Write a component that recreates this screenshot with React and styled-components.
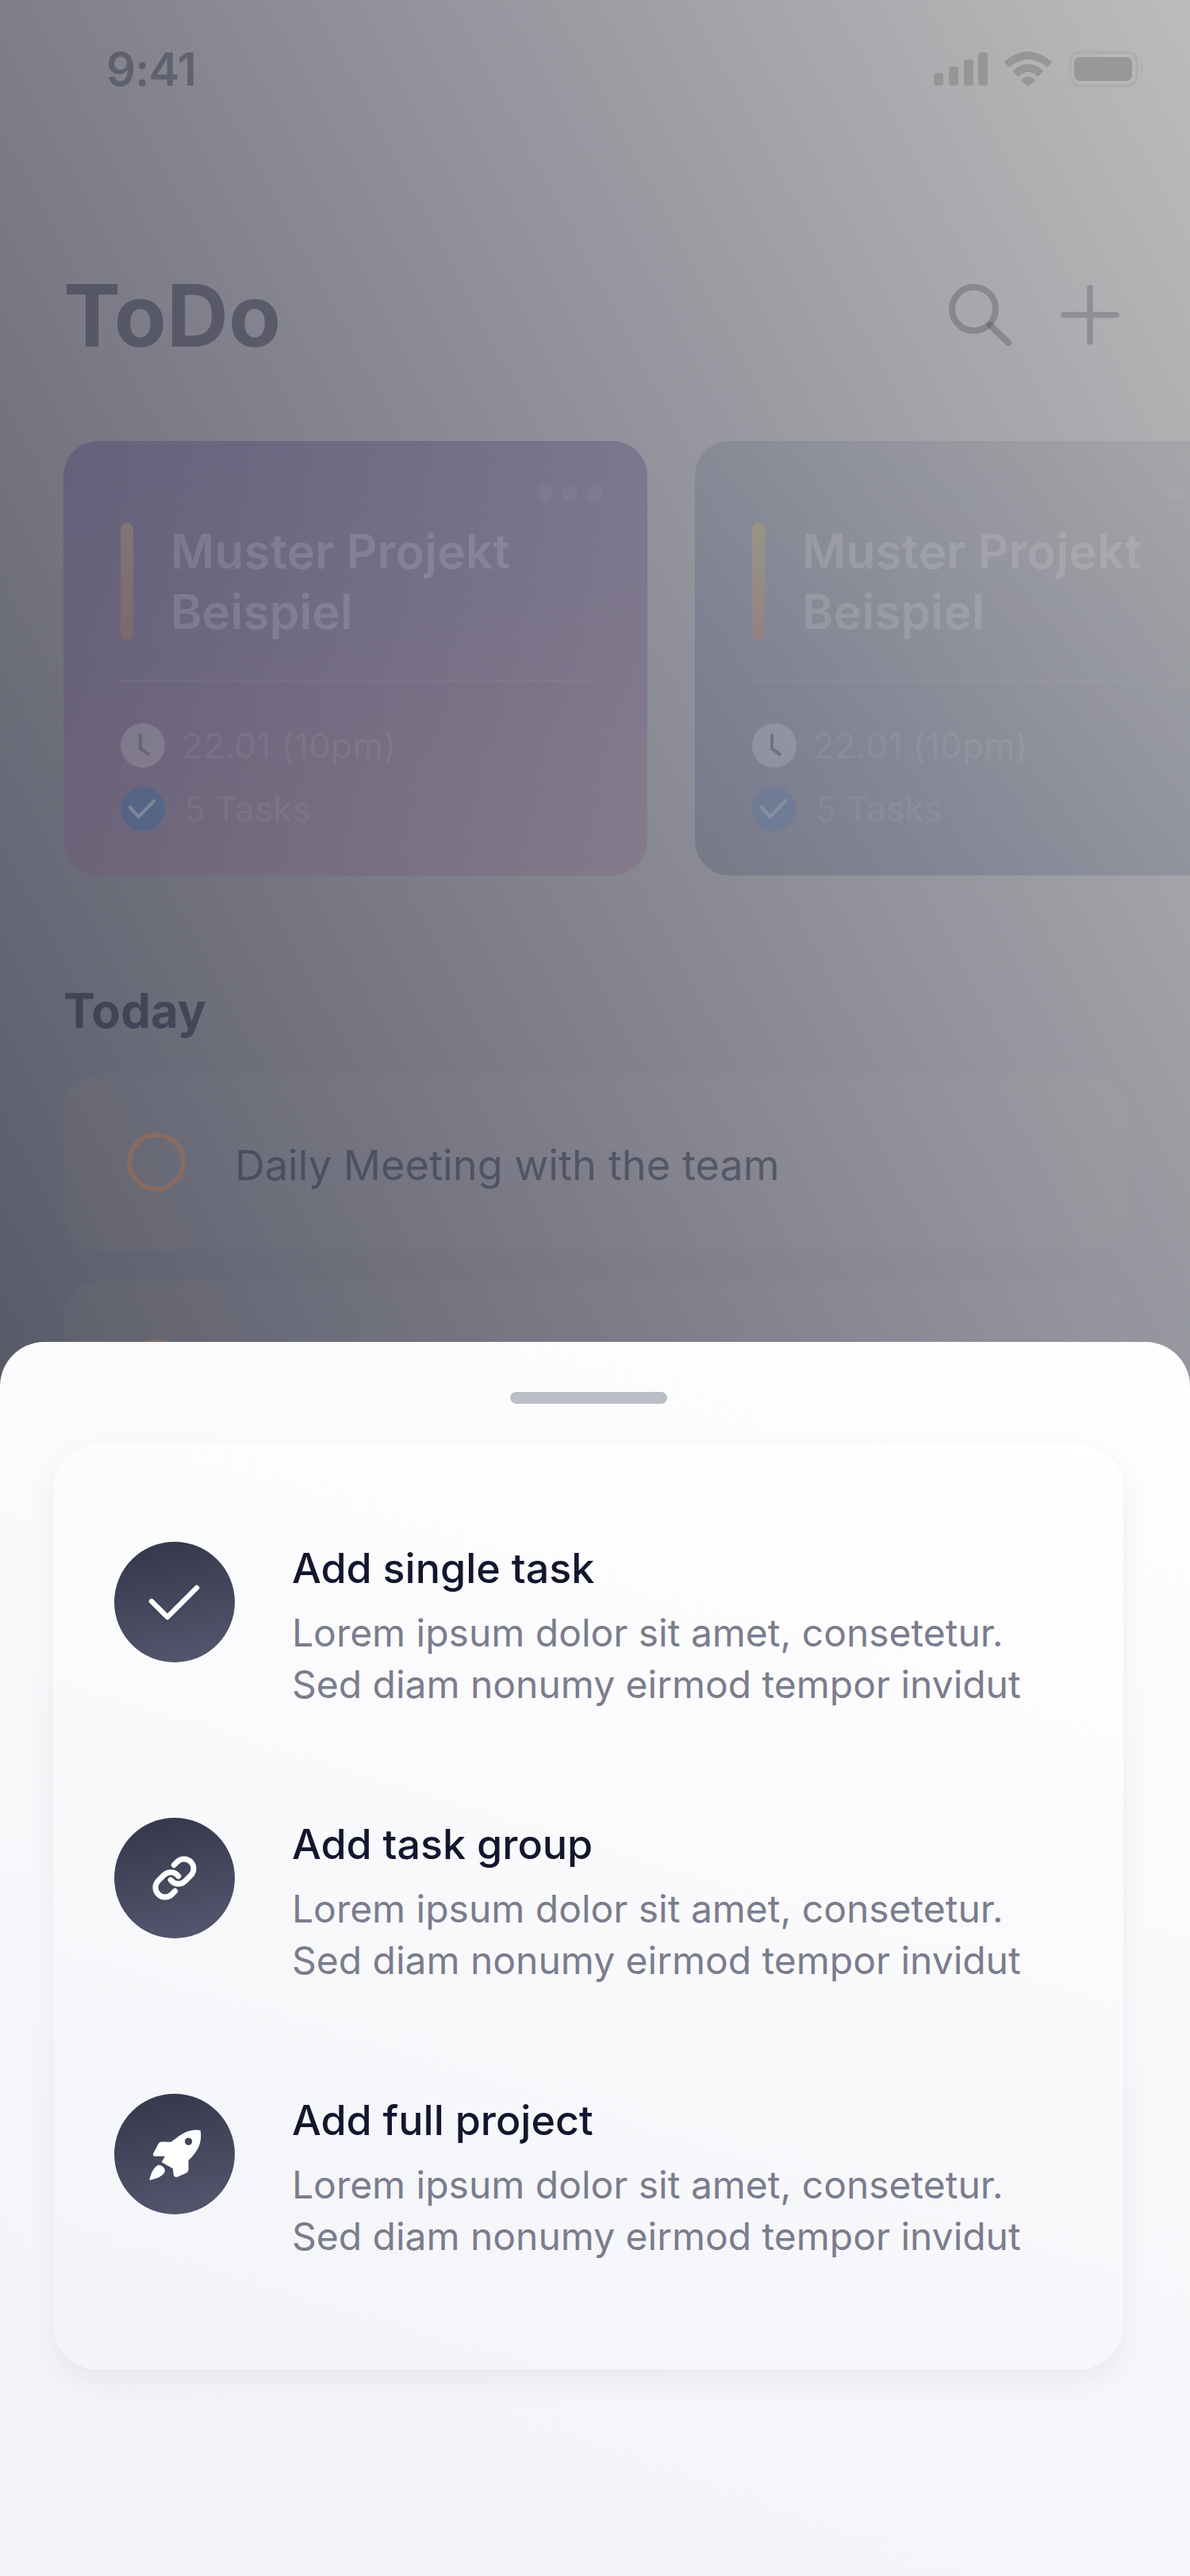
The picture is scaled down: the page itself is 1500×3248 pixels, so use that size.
import React from 'react'
import styled, { createGlobalStyle } from 'styled-components'

const Global = createGlobalStyle`
    html, body {
        margin: 0;
        padding: 0;
        font-family: Inter, "Noto Sans", sans-serif;
    }
`

const Screen = styled.div`
    width: 1500px;
    height: 3248px;
    overflow: hidden;
    display: flex;
    flex-direction: column;
`

const Backdrop = styled.div`
    height: 1748px;
    flex-shrink: 0;
    overflow: hidden;
    background: linear-gradient(62deg, #595a68 0%, #8b8c96 52%, #bcbcbc 100%);
`

const StatusBar = styled.div`
    height: 94px;
    margin-top: 40px;
    padding: 0 56px 0 134px;
    display: flex;
    align-items: center;
    justify-content: space-between;
`

const Time = styled.div`
    font-size: 58px;
    font-weight: 600;
    letter-spacing: -1px;
    color: rgba(40, 40, 60, 0.38);
`

const StatusIcons = styled.div`
    display: flex;
    align-items: center;
    gap: 20px;
`

const Header = styled.div`
    height: 120px;
    margin-top: 203px;
    padding: 0 89px 0 80px;
    display: flex;
    align-items: center;
    gap: 62px;
`

const Title = styled.div`
    flex: 1;
    font-size: 108px;
    font-weight: 700;
    color: rgba(50, 50, 70, 0.5);
`

const Projects = styled.div`
    display: flex;
    gap: 60px;
    margin-top: 99px;
    padding-left: 80px;
`

const ProjectCard = styled.div`
    width: 736px;
    height: 548px;
    flex-shrink: 0;
    box-sizing: border-box;
    padding: 56px 56px 0 72px;
    border-radius: 44px;
    background: ${p => p.$muted
        ? 'linear-gradient(222deg, rgba(150, 150, 150, 0.3), rgba(90, 95, 125, 0.3) 70%, rgba(78, 82, 112, 0.3))'
        : 'linear-gradient(170deg, rgba(58, 46, 105, 0.3), rgba(125, 90, 125, 0.3))'};
`

const Dots = styled.div`
    display: flex;
    justify-content: flex-end;
    gap: 12px;
`

const Dot = styled.span`
    width: 20px;
    height: 20px;
    border-radius: 50%;
    background: rgba(255, 255, 255, 0.045);
`

const ProjectHead = styled.div`
    display: flex;
    align-items: center;
    gap: 47px;
    margin-top: 25px;
`

const Accent = styled.div`
    width: 16px;
    height: 148px;
    border-radius: 8px;
    background: linear-gradient(180deg, rgba(240, 200, 66, 0.18), rgba(210, 120, 64, 0.19));
`

const ProjectName = styled.div`
    font-size: 60px;
    line-height: 76px;
    font-weight: 600;
    letter-spacing: 0.25px;
    color: rgba(255, 255, 255, 0.13);
`

const Divider = styled.div`
    width: 596px;
    height: 2px;
    margin: 48px 0 53px;
    background: rgba(255, 255, 255, 0.04);
`

const Meta = styled.div`
    display: flex;
    align-items: center;
    gap: ${p => p.$gap}px;
    height: 56px;
    margin-bottom: 24px;
    font-size: 44px;
    font-weight: 400;
    letter-spacing: ${p => p.$tracking}px;
    color: rgba(255, 255, 255, 0.08);
`

const MetaIcon = styled.div`
    width: 56px;
    height: 56px;
    border-radius: 50%;
    background: ${p => p.$bg};
    svg {
        display: block;
    }
`

const SectionTitle = styled.div`
    height: 80px;
    line-height: 80px;
    margin-top: 130px;
    padding-left: 80px;
    font-size: 60px;
    font-weight: 700;
    color: rgba(30, 35, 60, 0.52);
`

const TaskList = styled.div`
    display: flex;
    flex-direction: column;
    gap: 40px;
    margin: 42px 0 0 80px;
    width: 1340px;
`

const TaskRow = styled.div`
    height: 220px;
    box-sizing: border-box;
    padding: 0 0 0 80px;
    display: flex;
    align-items: center;
    gap: 62px;
    flex-shrink: 0;
    border-radius: 44px;
    background: rgba(255, 255, 255, 0.02);
    box-shadow: 0 0 0 1px rgba(255, 255, 255, 0.006);
`

const TaskCircle = styled.div`
    width: 74px;
    height: 74px;
    box-sizing: border-box;
    margin-top: -3px;
    border: 6px solid rgba(190, 110, 60, 0.36);
    border-radius: 50%;
    flex-shrink: 0;
`

const TaskText = styled.div`
    margin-top: 6px;
    font-size: 52.3px;
    color: rgba(50, 51, 74, 0.56);
`

const Sheet = styled.div`
    position: relative;
    height: 1556px;
    margin-top: -56px;
    box-sizing: border-box;
    padding: 63px 84px 0 67px;
    display: flex;
    flex-direction: column;
    align-items: center;
    border-radius: 56px 56px 0 0;
    background: linear-gradient(200deg, #fefefe 0%, #f2f3f8 100%);
`

const Handle = styled.div`
    width: 198px;
    height: 15px;
    border-radius: 8px;
    background: #bcbec6;
`

const Options = styled.div`
    width: 100%;
    height: 1168px;
    margin-top: 50px;
    box-sizing: border-box;
    padding: 124px 0 0 77px;
    display: flex;
    flex-direction: column;
    gap: 136px;
    border-radius: 58px;
    background: linear-gradient(197deg, #ffffff 0%, #f3f4f8 100%);
    box-shadow: 0 14px 34px rgba(50, 52, 80, 0.07);
`

const Option = styled.div`
    display: flex;
    align-items: flex-start;
    gap: 72px;
`

const OptionBody = styled.div`
    padding-top: 2px;
`

const OptionIcon = styled.div`
    width: 152px;
    height: 152px;
    flex-shrink: 0;
    border-radius: 50%;
    display: flex;
    align-items: center;
    justify-content: center;
    background: linear-gradient(168deg, #33364a 0%, #575870 100%);
`

const OptionTitle = styled.div`
    height: 64px;
    line-height: 64px;
    font-size: 52px;
    font-weight: 500;
    color: #14162e;
`

const OptionText = styled.div`
    margin-top: 17px;
    font-size: 48px;
    line-height: 64.5px;
    letter-spacing: -0.02px;
    color: #7b7c8d;
`

const SignalIcon = () => (
    <svg width="68" height="42" viewBox="0 0 68 42" fill="#969696">
        <rect x="0" y="26" width="12" height="16" rx="3.5" />
        <rect x="19" y="18" width="12" height="24" rx="3.5" />
        <rect x="38" y="9" width="12" height="33" rx="3.5" />
        <rect x="56" y="0" width="12" height="42" rx="3.5" />
    </svg>
)

const WifiIcon = () => (
    <svg width="62" height="44" viewBox="345 75 185 133" fill="#969696">
        <path d="M345 115 Q437 35 530 115 L510 135 Q437 75 365 135 Z" />
        <path d="M378 150 Q437 95 497 150 L475 170 Q437 135 400 170 Z" />
        <path d="M410 185 Q437 155 465 185 L437 208 Z" />
    </svg>
)

const BatteryIcon = () => (
    <svg width="97" height="46" viewBox="0 0 97 46">
        <rect x="2" y="2" width="84" height="42" rx="12" fill="none" stroke="#adadad" strokeWidth="3.5" />
        <rect x="7" y="8" width="73" height="30" rx="7" fill="#989898" />
        <path d="M91 15 Q97 23 91 31 Z" fill="#adadad" />
    </svg>
)

const SearchIcon = () => (
    <svg width="79" height="78" viewBox="0 0 79 78" fill="none" stroke="rgba(60, 60, 80, 0.3)" strokeWidth="8" strokeLinecap="round">
        <circle cx="31.5" cy="31.5" r="27.5" />
        <path d="M52 52 L75 74" />
    </svg>
)

const PlusIcon = () => (
    <svg width="74" height="76" viewBox="0 0 74 76" fill="none" stroke="rgba(60, 60, 80, 0.27)" strokeWidth="7.5" strokeLinecap="round">
        <path d="M37 4 V72 M4 38 H70" />
    </svg>
)

const ClockGlyph = () => (
    <svg width="56" height="56" viewBox="0 0 56 56" fill="none" stroke="rgba(80, 78, 100, 0.5)" strokeWidth="4" strokeLinecap="round" strokeLinejoin="round">
        <path d="M25 15 V32 L35 39" />
    </svg>
)

const CheckGlyph = ({ color }) => (
    <svg width="56" height="56" viewBox="0 0 56 56" fill="none" stroke={color} strokeWidth="4.5" strokeLinecap="round" strokeLinejoin="round">
        <path d="M12 26 L22.5 38 L42 18" />
    </svg>
)

const TickIcon = () => (
    <svg width="152" height="152" viewBox="0 0 152 152" fill="none" stroke="#fff" strokeWidth="6.5" strokeLinecap="round" strokeLinejoin="round" style={{ filter: 'drop-shadow(0 2px 2px rgba(30, 30, 50, 0.2))' }}>
        <path d="M47 75 L67 95 L104 58" />
    </svg>
)

const LinkIcon = () => (
    <svg width="58" height="58" viewBox="0 0 24 24" fill="none" stroke="#fff" strokeWidth="2.9" strokeLinecap="round" strokeLinejoin="round">
        <path d="M10 13a5 5 0 0 0 7.54.54l3-3a5 5 0 0 0-7.07-7.07l-1.72 1.71" />
        <path d="M14 11a5 5 0 0 0-7.54-.54l-3 3a5 5 0 0 0 7.07 7.07l1.71-1.71" />
    </svg>
)

const RocketIcon = () => (
    <svg width="67" height="67" viewBox="260 215 200 200" fill="#fff" fillRule="evenodd">
        <path d="M456 224 C430 218 395 226 362 256 L345 268 L312 267 Q302 267 297 276 L278 312 Q276 322 286 322 L322 322 L310 344 L352 368 L355 392 Q357 402 368 400 L402 385 Q411 381 411 372 L411 337 C440 310 465 275 456 224 Z M425 266 a14 14 0 1 0 -28 0 a14 14 0 1 0 28 0 Z" />
        <path d="M264 412 C268 390 278 365 296 355 Q306 352 316 362 Q326 372 320 384 C310 400 285 408 264 412 Z" />
    </svg>
)

const options = [
    { title: 'Add single task', Icon: TickIcon },
    { title: 'Add task group', Icon: LinkIcon },
    { title: 'Add full project', Icon: RocketIcon },
]

const Project = ({ muted }) => (
    <ProjectCard $muted={muted}>
        <Dots><Dot /><Dot /><Dot /></Dots>
        <ProjectHead>
            <Accent />
            <ProjectName>Muster Projekt<br />Beispiel</ProjectName>
        </ProjectHead>
        <Divider />
        <Meta $gap={21} $tracking={0.35}>
            <MetaIcon $bg="rgba(255, 255, 255, 0.14)"><ClockGlyph /></MetaIcon>
            22.01 (10pm)
        </Meta>
        <Meta $gap={24} $tracking={0}>
            <MetaIcon $bg={muted ? 'rgba(60, 110, 180, 0.2)' : 'rgba(50, 100, 150, 0.42)'}>
                <CheckGlyph color="rgba(150, 155, 165, 0.6)" />
            </MetaIcon>
            5 Tasks
        </Meta>
    </ProjectCard>
)

export default function App() {
    return (
        <Screen>
            <Global />
            <Backdrop>
                <StatusBar>
                    <Time>9:41</Time>
                    <StatusIcons>
                        <SignalIcon />
                        <WifiIcon />
                        <BatteryIcon />
                    </StatusIcons>
                </StatusBar>
                <Header>
                    <Title>ToDo</Title>
                    <SearchIcon />
                    <PlusIcon />
                </Header>
                <Projects>
                    <Project />
                    <Project muted />
                </Projects>
                <SectionTitle>Today</SectionTitle>
                <TaskList>
                    <TaskRow>
                        <TaskCircle />
                        <TaskText>Daily Meeting with the team</TaskText>
                    </TaskRow>
                    <TaskRow>
                        <TaskCircle />
                    </TaskRow>
                </TaskList>
            </Backdrop>
            <Sheet>
                <Handle />
                <Options>
                    {options.map(({ title, Icon }) => (
                        <Option key={title}>
                            <OptionIcon><Icon /></OptionIcon>
                            <OptionBody>
                                <OptionTitle>{title}</OptionTitle>
                                <OptionText>
                                    Lorem ipsum dolor sit amet, consetetur.<br />
                                    Sed diam nonumy eirmod tempor invidut
                                </OptionText>
                            </OptionBody>
                        </Option>
                    ))}
                </Options>
            </Sheet>
        </Screen>
    )
}
